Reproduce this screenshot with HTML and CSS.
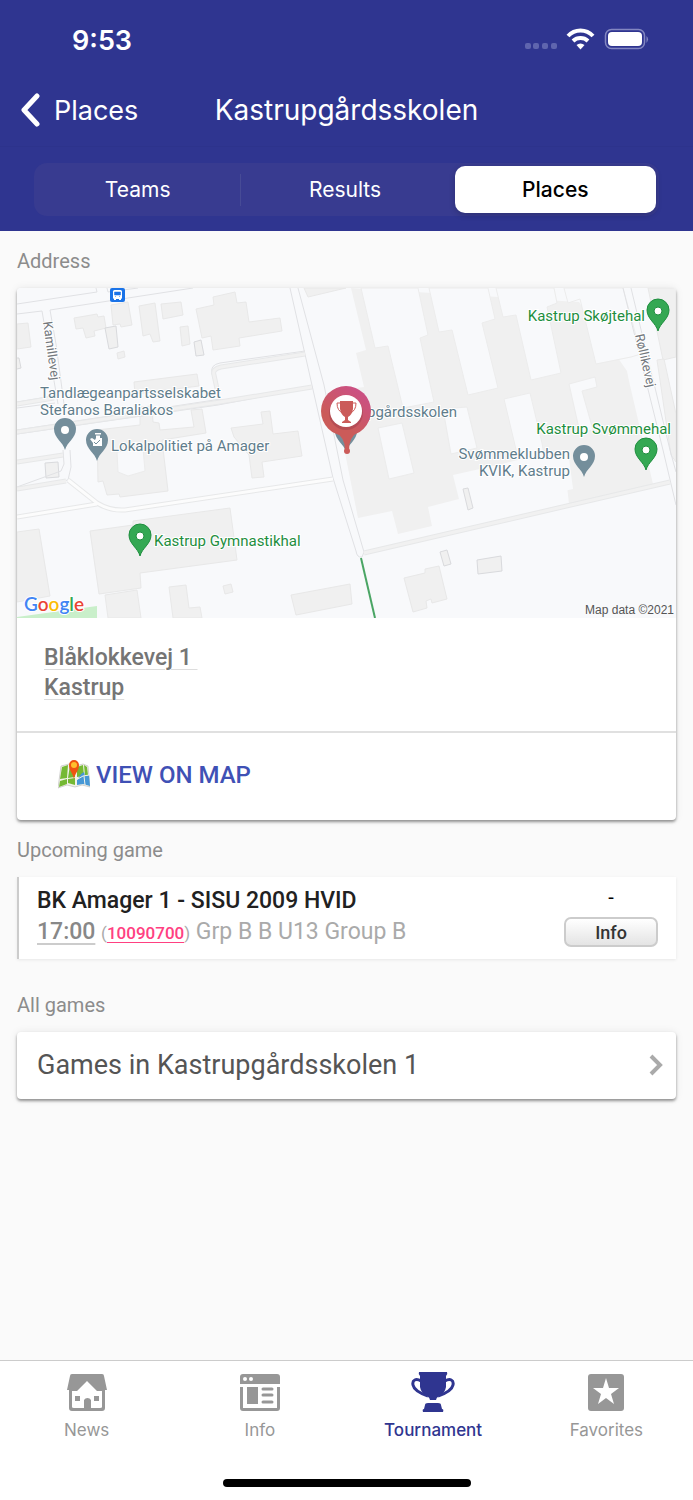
FILE: index.html
```
<!DOCTYPE html>
<html lang="da">
<head>
	<meta charset="UTF-8">
	<meta name="viewport" content="width=device-width, initial-scale=1">
	<title>Kastrupgårdsskolen</title>
	<link rel="stylesheet" href="styles.css">
</head>
<body>
	<header class="top">
		<div class="status">
			<span class="time">9:53</span>
			<svg class="status-icons" width="126" height="24" viewBox="0 0 126 24">
				<g fill="#5f65ae">
					<rect x="2" y="15" width="6" height="6" rx="2"/>
					<rect x="10" y="15" width="6" height="6" rx="2"/>
					<rect x="19" y="15" width="6" height="6" rx="2"/>
					<rect x="28" y="15" width="6" height="6" rx="2"/>
				</g>
				<g fill="none" stroke="#fff" stroke-width="4">
					<path d="M45 8a17 17 0 0 1 25 0"/>
					<path d="M50 13a11 11 0 0 1 15 0"/>
				</g>
				<path d="M53.500 17a6 6 0 0 1 8 0l-4 4.500z" fill="#fff"/>
				<rect x="82.500" y="1.500" width="39" height="19" rx="6" fill="none" stroke="#8387c1" stroke-width="1.500"/>
				<rect x="85" y="4" width="34" height="14" rx="4" fill="#fff"/>
				<path d="M123.500 8q3 3 0 7z" fill="#8387c1"/>
			</svg>
		</div>
		<nav class="nav">
			<a class="back" href="#">
				<svg width="20" height="34" viewBox="0 0 20 34"><path d="M17 3L4 17l13 14" fill="none" stroke="#fff" stroke-width="5" stroke-linecap="round" stroke-linejoin="round"/></svg>
				Places
			</a>
			<h1>Kastrupgårdsskolen</h1>
		</nav>
		<div class="segment">
			<button type="button">Teams</button>
			<button type="button">Results</button>
			<button type="button" class="act">Places</button>
		</div>
	</header>

	<main class="content">
		<h2>Address</h2>
		<section class="card address">
			<svg class="map" viewBox="17 288 659 330" role="img" aria-label="Map of Kastrupgårdsskolen">
				<defs>
					<linearGradient id="pinFill" gradientUnits="userSpaceOnUse" x1="330" y1="440" x2="366" y2="390">
						<stop offset=".3" stop-color="#cb5b59"/>
						<stop offset="1" stop-color="#cb4f88"/>
					</linearGradient>
					<g id="pin">
						<path d="M0 16C-2 8-11 4-11-5A11 11 0 0 1 11-5C11 4 2 8 0 16z"/>
						<circle cy="-4" r="4" fill="#fff"/>
					</g>
				</defs>
				<rect x="17" y="288" width="659" height="330" fill="#f8f9fb"/>

				<!-- buildings -->
				<g fill="#f0f0f0" stroke="#e8e8e8">
					<path d="M17 324l11-1 3 24-14 2z"/>
					<path d="M74 318l23-4 1 3 6-1 2 12-12 3 1 5-9 2-3-10-7 1z"/>
					<path d="M111 305l17-3 4 23-11 2-1-3-7 1z"/>
					<path d="M117 353l7-2 1 6-7 2z"/>
					<path d="M139 306l16-3 5 38-7 1-3-8-7 2z"/>
					<path d="M161 304l20-2 2 13-20 4z"/>
					<path d="M180 327l8-1 2 18-8 2z"/>
					<path d="M196 309l18-4-1-8 22-5 2 11 9-1 3 20 31-4 2 13-43 7 1 8-27 4-2-14-9 2z"/>
					<path d="M134 382l63-8 2 12-64 8z"/>
					<path d="M304 288l4 9 38-9z"/>
					<path d="M231 428l32-4-2-12 9-1 3 23 25-3 4 25-40 6 2 15-12 1-3-23-15-18z"/>
					<path d="M97 430l43-5v-18l12-1 1 16 6 1 1 7 34-3-3-17 11-1 4 24-44 7 6 51-48 6-1-3-12 1-4-14-5 1z"/>
					<path d="M17 532l22-3 11 67-33 6z"/>
					<path d="M90 531l43-6v-4l97-13 7 52-97 13 1 15-42 6z"/>
					<path d="M105 595l32-5 4 28h-33z"/>
					<path d="M169 587l17-2 3 23 11-1 2 11h-29z"/>
					<path d="M223 586l8-2 2 8-8 2z"/>
					<path d="M291 595l59-11 2 20-56 11z"/>
					<path d="M404 578l21-5v-4l14-3 8 33-15 4-1-4-5 2 1 7-14 4z"/>
					<path d="M648 288l15 72 13-3v-69z"/>
					<path d="M657 360l7-1 12 55v48l-5-7z"/>
				</g>
				<g fill="#f0f0f0" stroke="#d9dadd">
					<path d="M17 358h2l2 10-4 1"/>
					<path d="M105 328l11-2 2 21-9 2z"/>
					<path d="M194 342l7-2 3 15-8 1z"/>
					<path d="M45 463l13-1 1 15-13 1z"/>
					<path d="M463 489l5-1 5 20-5 2z"/>
					<path d="M440 552l7-2 4 14-7 2z"/>
					<path d="M477 560l24-4 1 15-24 3z"/>
				</g>
				<!-- school block -->
				<path d="M351 288l15 62-10 3 8 34-29 4v30l7 17 16 80 34-7 6 23 34-8-4-19 31-8-6-24 85-19 25-6 6 54 84-20-24-103-2-10-48-69z" fill="#f0f0f0"/>
				<g fill="#f8f9fb" stroke="#ececec">
					<path d="M361 288h57l10 47-8 3 14 64-31 6-15-62-13 2z"/>
					<path d="M429 288h59l7 31-13 4 16 65-30 7-16-65-13 2z"/>
					<path d="M496 288h58l3 15-10 4 14 66-30 7-15-65-13 2z"/>
					<path d="M564 288h59l18 66-10 3-35 7-16-65-12 4z"/>
					<path d="M569 384l26-7 2 10-15 4 11 39-13 3z"/>
					<path d="M504 399l26-6 12 50 5 30-23 10z"/>
					<path d="M378 428l24-5 12 50-25 6z"/>
					<path d="M443 409l24-2 10 41-26 6z"/>
				</g>
				<path d="M476 471l42-11 50-9 5 38-60 14z" fill="#f8f9fb"/>
				<path d="M117 452l26-4 2 23-17 5-10-4z" fill="#f8f9fb" stroke="#ececec"/>
				<path d="M17 617l80-11v12H17z" fill="#c9efca"/>

				<!-- streets -->
				<g fill="none" stroke="#e0e1e4">
					<path d="M17 304l80-12-1-4M107 288l1 4 30-4M17 314l25-3 16 93M50 310l143-22M50 310l6 34 8 60M17 402l36-6M17 408l38-5"/>
					<path d="M17 430l204-31v4l92-15M17 434l201-29 95-18M216 389l-4-16q-2-8 8-10l85-12"/>
					<path d="M290 288l43 190 23 73q1 7 6 6l2-5-21-72-19-95-26-97"/>
					<path d="M63 450l1 14-3 7-44 16M70 450l1 17-3 13-51 10M17 461l46-7"/>
					<path d="M623 288l40 162 13 55M631 288l39 162 6 22"/>
				</g>
				<g fill="none" stroke="#e7e8e9" stroke-width="5">
					<path d="M17 432l203-30 92-15M217 389l-3-14q-2-6 7-8l84-13M17 404l37-6M17 489l49-8M17 462l46-7"/>
					<path d="M364 553l306-71"/>
					<path d="M68 480l29 23q13 8 28 7l208-31M17 517l80-13"/>
				</g>
				<g fill="none" stroke="#f1f1f1" stroke-width="3">
					<path d="M17 432l203-30 92-15M217 389l-3-14q-2-6 7-8l84-13M17 404l37-6M17 489l49-8M17 462l46-7"/>
					<path d="M364 553l306-71"/>
				</g>
				<path d="M68 480l29 23q13 8 28 7l208-31M17 517l80-13" fill="none" stroke="#fcfcfc" stroke-width="3"/>
				<path d="M361 558l14 60" stroke="#4aa564" stroke-width="2"/>

				<!-- bus stop -->
				<rect x="110" y="288" width="15" height="14" rx="2" fill="#1a73e8"/>
				<rect x="113" y="290" width="9" height="9" rx="1.500" fill="#fff"/>
				<path d="M114.500 292h6v3h-6zM115 296.500h1M119 296.500h1" fill="#1a73e8" stroke="#1a73e8" stroke-width=".5"/>
				<path d="M114 299h2v1h-2zM119 299h2v1h-2z" fill="#fff"/>

				<!-- places -->
				<g fill="#748e9b">
					<use href="#pin" x="65" y="434"/>
					<use href="#pin" x="584" y="461"/>
					<path d="M97 461c-2-8-11-12-11-21a11 11 0 0 1 22 0c0 9-9 13-11 21z"/>
					<path d="M346 452c-2-8-11-12-11-21h22c0 9-9 13-11 21z"/>
				</g>
				<path d="M95 433h6v2h-1v3h2v8h-9v-3l-3-4 2-1 3 2 1-2v-3h-1z" fill="#fff"/>
				<path d="M94 442l2 2 4-4M95 435h6" fill="none" stroke="#748e9b"/>
				<g fill="#34a853" stroke="#1e8e3e">
					<use href="#pin" x="140" y="540"/>
					<use href="#pin" x="658" y="315"/>
					<use href="#pin" x="646" y="454"/>
				</g>
				<g class="label grey">
					<text x="40" y="398">Tandlægeanpartsselskabet</text>
					<text x="40" y="415">Stefanos Baraliakos</text>
					<text x="111" y="451">Lokalpolitiet på Amager</text>
					<text x="367" y="417">pgårdsskolen</text>
					<text x="570" y="459" text-anchor="end">Svømmeklubben</text>
					<text x="570" y="476" text-anchor="end">KVIK, Kastrup</text>
				</g>
				<g class="label green">
					<text x="154" y="546">Kastrup Gymnastikhal</text>
					<text x="645" y="321" text-anchor="end">Kastrup Skøjtehal</text>
					<text x="671" y="434" text-anchor="end">Kastrup Svømmehal</text>
				</g>
				<g class="label street">
					<text transform="translate(43 322) rotate(82)">Kamillevej</text>
					<text transform="translate(635 335) rotate(77)">Røllikevej</text>
				</g>

				<!-- selected place -->
				<g fill="url(#pinFill)">
					<circle cx="346" cy="411" r="25"/>
					<path d="M335 432q10 5 10 18h4q0-13 9-18z"/>
					<circle cx="347" cy="451" r="3"/>
				</g>
				<circle cx="346" cy="413" r="17" fill="#9f3f4c" opacity=".5"/>
				<circle cx="346" cy="411" r="16" fill="#fff"/>
				<path d="M340 401h13v8q-1 6-5 8v3l3 2v1h-9v-1l3-2v-3q-4-2-5-8z" fill="#cb5b59"/>
				<path d="M340 403h-3q0 8 6 10M353 403h3q0 8-6 10" fill="none" stroke="#cb5b59"/>

				<text class="google" x="24" y="611"><tspan fill="#4285f4">G</tspan><tspan fill="#ea4335">o</tspan><tspan fill="#fbbc05">o</tspan><tspan fill="#4285f4">g</tspan><tspan fill="#34a853">l</tspan><tspan fill="#ea4335">e</tspan></text>
				<text class="copy" x="674" y="614" text-anchor="end">Map data ©2021</text>
			</svg>
			<p class="street-address"><span>Blåklokkevej 1&nbsp;</span><br><span>Kastrup</span></p>
			<a class="view-map" href="#">
				<svg width="32" height="30" viewBox="0 0 32 30">
					<path d="M3 6l8-2 7 2 7-2 5 2 2 21-8-2-7 2-8-2-9 3z" fill="#f3f3ea" stroke="#aaa" stroke-width=".5"/>
					<path d="M4 7l6-2-1 13-7 1zM12 5l5 2v10l-7 1zM19 7l6-2 1 11-7 1zM26 5l3 2 1 8-3 1zM2 21l7-2v5l-8 3zM10 19l7-1v7l-7-2z" fill="#75b934"/>
					<path d="M19 20l4-6 3-2 1 4 4-1 1 11-7-2-6 1z" fill="#4698d6"/>
					<path d="M18 20l7-4 6-1M26 16l1 9" stroke="#f3f3ea" fill="none"/>
					<path d="M16 19C15 13 11 11 11 5a5 5 0 0 1 10 0c0 6-4 8-5 14z" fill="#ef5411"/>
					<circle cx="16" cy="5" r="3" fill="#ffc02d"/>
				</svg>
				VIEW ON MAP
			</a>
		</section>

		<h2>Upcoming game</h2>
		<section class="game">
			<div>
				<p class="teams">BK Amager 1 - SISU 2009 HVID</p>
				<p class="meta"><b>17:00</b> <small>(<a href="#">10090700</a>)</small> Grp B B U13 Group B</p>
			</div>
			<div class="result">
				<span>-</span>
				<button type="button">Info</button>
			</div>
		</section>

		<h2>All games</h2>
		<a class="card all-games" href="#">
			Games in Kastrupgårdsskolen 1
			<svg width="14" height="22" viewBox="0 0 14 22"><path d="M2 2l9 9-9 9" fill="none" stroke="#aaa" stroke-width="4"/></svg>
		</a>
	</main>

	<footer class="bottom">
		<nav class="tabs">
			<a href="#">
				<svg width="44" height="42" viewBox="0 0 44 42">
					<path d="M7 2h30q2 0 2 2l3 14h-2v18q0 3-3 3H7q-3 0-3-3V18H2L5 4q0-2 2-2z" fill="#979797"/>
					<path d="M7 19h5L22 9l10 10h5v16q0 1-2 1H26V28a4 4 0 0 0-7 0v8H9q-2 0-2-1z" fill="#fff"/>
					<path d="M10 24h5v5h-5zM29 24h5v5h-5z" fill="#979797"/>
				</svg>
				News
			</a>
			<a href="#">
				<svg width="44" height="42" viewBox="0 0 44 42">
					<path d="M5 2h34q3 0 3 3v7H2V5q0-3 3-3zM2 15h3v21h34V15h3v21q0 3-3 3H5q-3 0-3-3zM9 15h11v17H9z" fill="#979797"/>
					<circle cx="7" cy="7" r="2" fill="#fff"/>
					<circle cx="13" cy="7" r="2" fill="#fff"/>
					<path d="M25 17h9M25 23h9M25 30h9" stroke="#979797" stroke-width="3" stroke-linecap="round"/>
				</svg>
				Info
			</a>
			<a class="act" href="#">
				<svg width="44" height="42" viewBox="0 0 44 42" fill="#2f3590">
					<path d="M8 0h28q1 2-1 4v11q-1 6-7 9-3 2-3 4h-6q0-2-3-4-6-3-7-9V4Q7 2 8 0z"/>
					<path d="M10 9C5 6 1 8 2 13s9 9 15 11M34 9c5-3 9-1 8 4s-9 9-15 11" fill="none" stroke="#2f3590" stroke-width="3"/>
					<path d="M17 31h10q3 0 3 2l1 4q2 0 1 3H12q-1-3 1-3l1-4q0-2 3-2z"/>
				</svg>
				Tournament
			</a>
			<a href="#">
				<svg width="44" height="42" viewBox="0 0 44 42">
					<rect x="4" y="2" width="36" height="37" rx="3" fill="#979797"/>
					<path d="M22 6l3 10 10 0-8 6 3 10-8-6-8 6 3-10-8-6h10z" fill="#fff"/>
				</svg>
				Favorites
			</a>
		</nav>
		<div class="home-bar"></div>
	</footer>
</body>
</html>
```

FILE: styles.css
```
* {
	box-sizing: border-box;
}
body {
	margin: 0;
	min-height: 100vh;
	display: flex;
	flex-direction: column;
	background: #fafafa;
	font-family: Roboto, sans-serif;
}
h1, h2, p {
	margin: 0;
	font-weight: 400;
}
a {
	color: inherit;
	text-decoration: none;
}
button {
	font-family: inherit;
	cursor: pointer;
}

/* header */
.top {
	background: #2f3590;
	color: #fff;
	font-family: Inter, sans-serif;
	padding-bottom: 15px;
}
.status {
	display: flex;
	align-items: center;
	justify-content: space-between;
	height: 80px;
	padding: 0 44px 0 72px;
}
.time {
	font-size: 27px;
	font-weight: 600;
}
.nav {
	display: grid;
	grid-template-columns: 1fr auto 1fr;
	align-items: center;
	height: 67px;
	padding: 0 20px 6px;
	border-bottom: 1px solid #2d338c;
}
.back {
	display: flex;
	align-items: center;
	gap: 14px;
	font-size: 27px;
}
h1 {
	font-size: 28px;
}
.segment {
	display: grid;
	grid-template-columns: 1fr 1fr 1fr;
	margin: 16px 34px 0;
	padding: 3px 3px 3px 0;
	border-radius: 13px;
	background: #383b90;
}
.segment button {
	height: 47px;
	padding: 0;
	border: 0;
	background: none;
	color: #fff;
	font-size: 21px;
}
.segment button:first-child {
	background: linear-gradient(#474b96, #474b96) right center / 1px 32px no-repeat;
}
.segment .act {
	margin-left: 6px;
	border-radius: 10px;
	background: #fff;
	color: #000;
	font-weight: 500;
	box-shadow: 0 2px 6px rgba(0, 0, 0, .2);
}

/* content */
.content {
	flex: 1;
	padding: 0 17px;
}
h2 {
	padding: 18px 0 15px;
	color: #8c8c8c;
	font-size: 20px;
	line-height: 24px;
}
.card {
	display: block;
	background: #fff;
	border-radius: 4px;
	box-shadow: 0 2px 3px rgba(0, 0, 0, .4), 0 0 8px rgba(0, 0, 0, .08);
}
.address {
	overflow: hidden;
}
.map {
	display: block;
	width: 100%;
}
.label {
	font-size: 15px;
	paint-order: stroke;
	stroke: #fff;
	stroke-width: 2px;
}
.grey {
	fill: #5f7d8c;
}
.green {
	fill: #1e8e3e;
}
.street {
	fill: #73787d;
	font-size: 13px;
}
.google {
	font-family: Lato, sans-serif;
	font-size: 19px;
	font-weight: 600;
	paint-order: stroke;
	stroke: #fff;
	stroke-width: 2px;
}
.copy {
	fill: #555;
	font-family: "Liberation Sans", sans-serif;
	font-size: 12px;
}
.street-address {
	padding: 25px 27px 28px;
	border-bottom: 2px solid #e0e0e0;
	color: #757575;
	font-size: 23px;
	font-weight: 500;
	line-height: 30px;
}
.street-address span {
	text-decoration: underline 1px #ddd;
	text-underline-offset: 4px;
}
.view-map {
	display: flex;
	align-items: center;
	gap: 6px;
	height: 87px;
	padding: 0 0 3px 41px;
	color: #3f51b5;
	font-size: 24px;
	font-weight: 500;
}
.game {
	display: flex;
	justify-content: space-between;
	margin-bottom: 16px;
	padding: 8px 18px 10px;
	border-left: 2px solid #ccc;
	background: #fff;
	box-shadow: 0 1px 3px rgba(0, 0, 0, .08);
}
.teams {
	color: #212121;
	font-size: 23px;
	font-weight: 500;
	line-height: 31px;
}
.meta {
	color: #aaa;
	font-size: 23px;
	line-height: 31px;
}
.meta b {
	color: #888;
	font-weight: 500;
	text-decoration: underline 2px #ccc;
	text-underline-offset: 4px;
}
.meta small {
	font-size: 17px;
}
.meta a {
	color: #ff4081;
	font-weight: 500;
	text-decoration: underline;
	text-underline-offset: 3px;
}
.result {
	display: flex;
	flex-direction: column;
	align-items: center;
	font-size: 20px;
	line-height: 24px;
}
.result button {
	width: 94px;
	height: 30px;
	margin-top: 8px;
	padding: 0;
	border: 2px solid #ccc;
	border-radius: 7px;
	background: linear-gradient(#fff, #e4e4e4);
	color: #333;
	font-size: 18px;
	font-weight: 500;
}
.all-games {
	display: flex;
	align-items: center;
	justify-content: space-between;
	height: 67px;
	padding: 0 13px 2px 20px;
	color: #555;
	font-size: 27px;
}

/* bottom tabs */
.bottom {
	padding-bottom: 13px;
	border-top: 1px solid #ccc;
	background: #fff;
}
.tabs {
	display: grid;
	grid-template-columns: repeat(4, 1fr);
}
.tabs a {
	display: flex;
	flex-direction: column;
	align-items: center;
	gap: 6px;
	padding-top: 11px;
	color: #979797;
	font-family: Inter, sans-serif;
	font-size: 17px;
	line-height: 20px;
}
.tabs .act {
	color: #2f3590;
	font-weight: 500;
}
.home-bar {
	width: 248px;
	height: 8px;
	margin: 39px auto 0;
	border-radius: 4px;
	background: #000;
}
```
